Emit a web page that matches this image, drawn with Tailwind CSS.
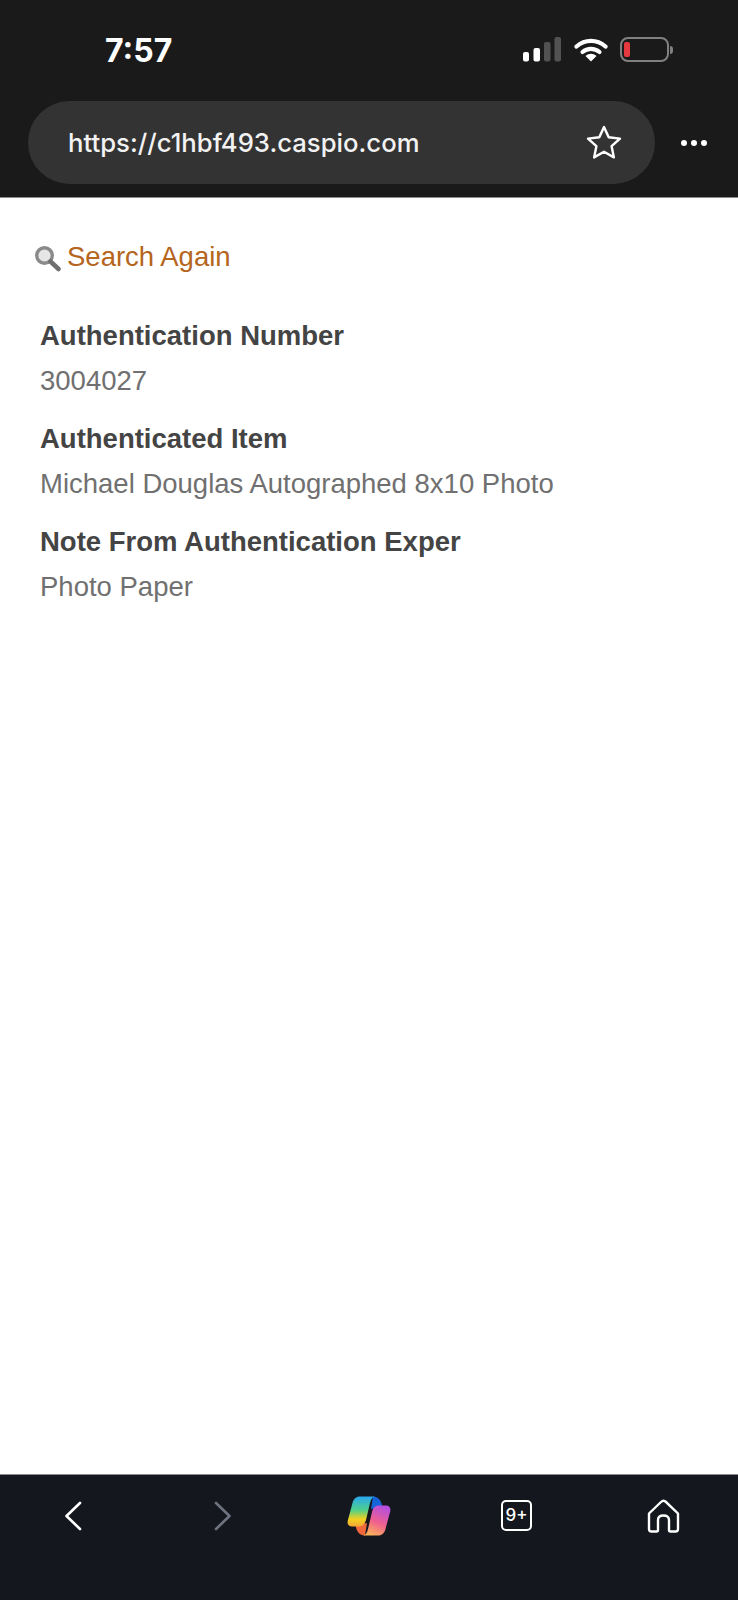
<!DOCTYPE html>
<html lang="en">

<head>
    <title>Authentication Result</title>
    <meta charset="utf-8">
    <meta name="viewport" content="width=device-width, initial-scale=1.0">
    <script src="https://cdn.jsdelivr.net/npm/@tailwindcss/browser@4"></script>
</head>

<body class="bg-white">
    <div class="w-[738px] h-[1600px] flex flex-col overflow-hidden font-['Liberation_Sans',sans-serif]">
        <!-- Status bar + address bar -->
        <header class="h-[198px] shrink-0 bg-[#1a1a1a] border-b-[1px] border-[#8a8a8a] font-['Inter',sans-serif]">
            <div class="h-[101px] flex items-start">
                <div class="ml-[105px] mt-[32px] text-[32px] leading-[38px] font-bold text-white">7:57</div>
                <div class="ml-auto mr-[65px] mt-[37px] flex items-center">
                    <svg width="38" height="25" viewBox="0 0 38 25" class="mr-[13px]">
                        <rect x="0" y="15" width="6" height="9.500" rx="2" fill="#fff" />
                        <rect x="10.500" y="11" width="6.500" height="13.500" rx="2" fill="#fff" />
                        <rect x="21" y="5" width="6.500" height="19.500" rx="2" fill="#525252" />
                        <rect x="31.500" y="0" width="6.500" height="24.500" rx="2" fill="#525252" />
                    </svg>
                    <svg width="34" height="25" viewBox="0 0 34 25" class="mr-[12px]" fill="none">
                        <path d="M2.500 9.500C11 2 23 2 31.500 9.500" stroke="#fff" stroke-width="4.200" stroke-linecap="round" />
                        <path d="M8.500 15C13.500 10.800 20.500 10.800 25.500 15" stroke="#fff" stroke-width="4.200" stroke-linecap="round" />
                        <path d="M11.500 19C15 16 19 16 22.500 19L17 24.500Z" fill="#fff" />
                    </svg>
                    <div class="flex items-center">
                        <div class="w-[49px] h-[25px] border-[2px] border-[#808080] rounded-[8px] flex items-center pl-[2px]">
                            <div class="w-[6px] h-[15px] rounded-[2px] bg-[#e5393f]"></div>
                        </div>
                        <div class="w-[3px] h-[8px] bg-[#808080] rounded-r-[3px] ml-[1px]"></div>
                    </div>
                </div>
            </div>
            <div class="flex items-center">
                <div class="ml-[28px] w-[627px] h-[83px] rounded-full bg-[#333333] flex items-center pl-[40px] pr-[33px]">
                    <span class="text-[25.7px] font-medium leading-[30px] text-[#f2f2f2]">https://c1hbf493.caspio.com</span>
                    <svg width="36" height="35" viewBox="0 0 36 35" class="ml-auto" fill="none">
                        <path d="M18 2L22.700 12.300L34 13.600L25.600 21.200L27.900 32.400L18 26.800L8.100 32.400L10.400 21.200L2 13.600L13.300 12.300Z" stroke="#fff" stroke-width="2.400" stroke-linejoin="round" />
                    </svg>
                </div>
                <div class="ml-[26px] flex gap-[4px]">
                    <span class="w-[6px] h-[6px] rounded-full bg-white"></span>
                    <span class="w-[6px] h-[6px] rounded-full bg-white"></span>
                    <span class="w-[6px] h-[6px] rounded-full bg-white"></span>
                </div>
            </div>
        </header>

        <!-- Page content -->
        <main class="flex-1 pt-[44px] pl-[34px]">
            <a href="#" class="flex items-center h-[30px] text-[27.5px] text-[#b5651d]">
                <svg width="27" height="27" viewBox="0 0 27 27" class="mt-[3px]" fill="none">
                    <circle cx="10.500" cy="10.500" r="7.800" fill="#e6e6e6" stroke="#8a8a8a" stroke-width="3.400" />
                    <path d="M16.500 16.500L24.500 24" stroke="#6f6f6f" stroke-width="4.500" stroke-linecap="round" />
                </svg>
                <span class="ml-[6px]">Search Again</span>
            </a>
            <dl class="mt-[48px] pl-[6px] text-[27.5px] leading-[31px]">
                <dt class="font-bold text-[#444444]">Authentication Number</dt>
                <dd class="mt-[14px] text-[#707070]">3004027</dd>
                <dt class="mt-[27px] font-bold text-[#444444]">Authenticated Item</dt>
                <dd class="mt-[14px] text-[#707070]">Michael Douglas Autographed 8x10 Photo</dd>
                <dt class="mt-[27px] font-bold text-[#444444]">Note From Authentication Exper</dt>
                <dd class="mt-[14px] text-[#707070]">Photo Paper</dd>
            </dl>
        </main>

        <!-- Bottom toolbar -->
        <nav class="h-[126px] shrink-0 bg-[#14171e] border-t-[1px] border-[#8a8a8a]">
            <div class="h-[81px] flex items-center">
                <svg width="18" height="30" viewBox="0 0 18 30" class="ml-[64px]" fill="none">
                    <path d="M16 2L2.500 15L16 28" stroke="#fff" stroke-width="2.600" stroke-linecap="round" stroke-linejoin="round" />
                </svg>
                <svg width="18" height="30" viewBox="0 0 18 30" class="ml-[132px]" fill="none">
                    <path d="M2 2L15.500 15L2 28" stroke="#6f7280" stroke-width="2.600" stroke-linecap="round" stroke-linejoin="round" />
                </svg>
                <svg width="44" height="42" viewBox="0 0 44 42" class="ml-[115px]">
                    <defs>
                        <linearGradient id="copilotLeft" x1="0.300" y1="0" x2="0.300" y2="1">
                            <stop offset="0" stop-color="#2aa7f0" />
                            <stop offset="0.450" stop-color="#4fd08a" />
                            <stop offset="0.750" stop-color="#f2d21f" />
                            <stop offset="1" stop-color="#f4a53a" />
                        </linearGradient>
                        <linearGradient id="copilotRight" x1="0.700" y1="0" x2="0.300" y2="1">
                            <stop offset="0" stop-color="#b44fe0" />
                            <stop offset="0.550" stop-color="#f0608e" />
                            <stop offset="1" stop-color="#fbb35a" />
                        </linearGradient>
                    </defs>
                    <path d="M26 1.500C31 1.500 34 5 35.500 12L24 14Z" fill="#1565d8" />
                    <path d="M18 40.500C12.500 40.500 9.500 36.500 8.500 30L20 28Z" fill="#f0683c" />
                    <path d="M13 1.500H28C25 2 24 4.500 23 8L19 25C18 29 15.500 31.500 12 31.500H5C1.500 31.500 0 29 0.800 25.500L5.500 8C6.500 4 9 1.500 13 1.500Z" fill="url(#copilotLeft)" />
                    <path d="M32 10.500H39C42.500 10.500 44 13 43.200 16.500L38.500 34C37.500 38 35 40.500 31 40.500H16C19 40 20 37.500 21 34L25 17C26 13 28 10.500 32 10.500Z" fill="url(#copilotRight)" />
                </svg>
                <div class="ml-[110px] w-[31px] h-[31px] border-[2px] border-white rounded-[5px] flex items-center justify-center font-['Inter',sans-serif] text-[17px] font-medium leading-none text-white">9+</div>
                <svg width="33" height="34" viewBox="0 0 33 34" class="ml-[115px]" fill="none">
                    <path d="M2 14.500L14 3C15.500 1.600 17.500 1.600 19 3L31 14.500V30C31 31.500 30 32.500 28.500 32.500H23.500C22.500 32.500 22 32 22 31V21C22 18 20 16.500 16.500 16.500C13 16.500 11 18 11 21V31C11 32 10.500 32.500 9.500 32.500H4.500C3 32.500 2 31.500 2 30Z" stroke="#fff" stroke-width="2.400" stroke-linejoin="round" />
                </svg>
            </div>
        </nav>
    </div>
</body>

</html>
